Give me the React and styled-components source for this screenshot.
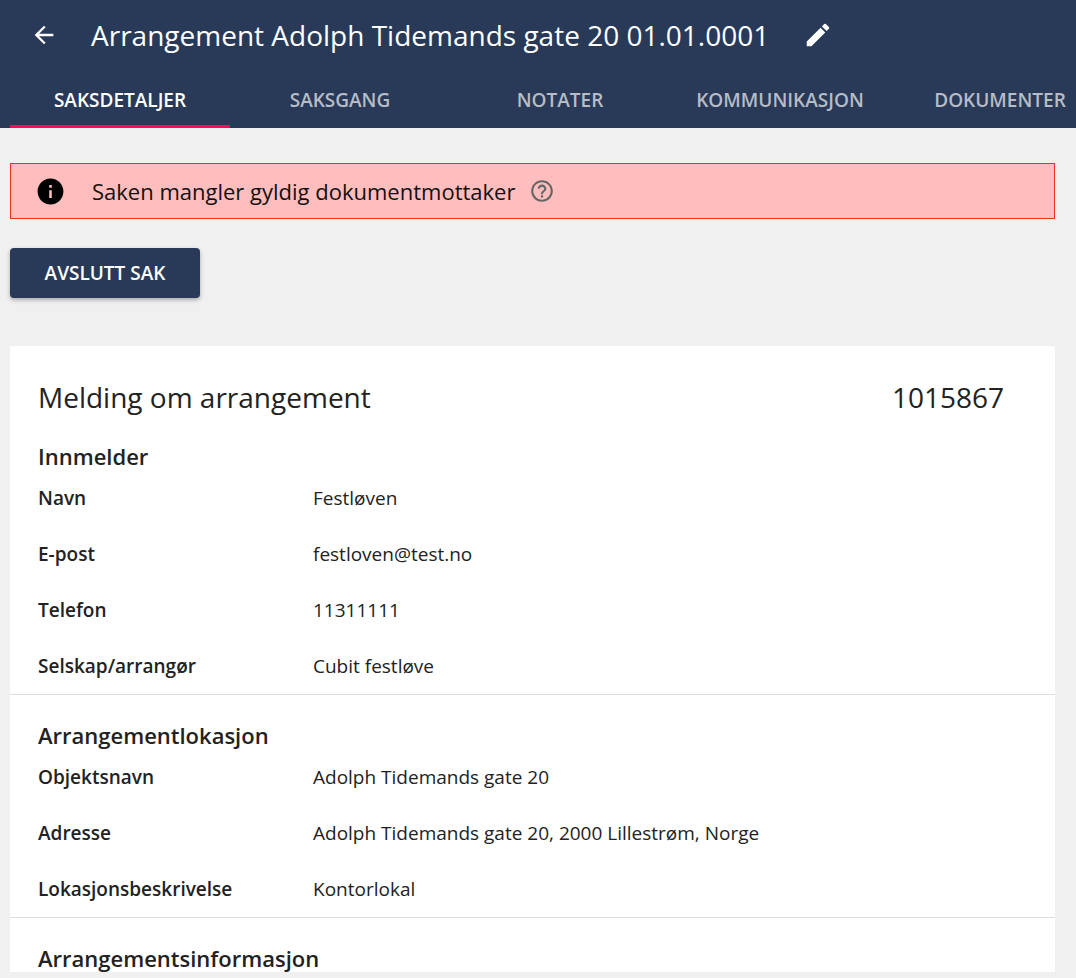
import React from 'react';
import styled, { createGlobalStyle } from 'styled-components';

const Global = createGlobalStyle`
  body { margin: 0; background: #f0f0f0; font-family: "Open Sans", sans-serif; color: #222; overflow: hidden; }
`;

const Header = styled.header`
  background: #283a58;
  color: #fff;
  height: 128px;
`;

const TitleRow = styled.div`
  display: flex;
  align-items: center;
  height: 70px;
  padding-left: 30px;
`;

const Title = styled.h1`
  font-size: 28px;
  font-weight: 400;
  margin: 0 34px 0 33px;
`;

const Tabs = styled.nav`
  display: flex;
  padding-left: 10px;
  height: 58px;
  white-space: nowrap;
`;

const Tab = styled.div`
  flex: 0 0 220px;
  display: flex;
  align-items: center;
  justify-content: center;
  font-size: 19px;
  font-weight: 600;
  color: ${p => (p.$active ? '#fff' : '#b7bcc6')};
  border-bottom: 3px solid ${p => (p.$active ? '#ff0a5a' : 'transparent')};
  box-sizing: border-box;
  padding-top: 4px;
`;

const Main = styled.main`
  padding: 35px 21px 0 10px;
`;

const Alert = styled.div`
  display: flex;
  align-items: center;
  height: 56px;
  box-sizing: border-box;
  background: #ffbdbd;
  border: 1px solid #e8361d;
  padding-left: 24px;
  font-size: 22px;
  color: #111;
`;

const AlertText = styled.span`
  margin: 0 14px 0 26px;
`;

const Button = styled.button`
  margin-top: 29px;
  width: 190px;
  height: 50px;
  border: none;
  border-radius: 4px;
  background: #283a58;
  color: #fff;
  font-family: "Open Sans", sans-serif;
  font-size: 19px;
  font-weight: 600;
  box-shadow: 0 2px 4px rgba(0,0,0,0.3);
`;

const Card = styled.section`
  margin-top: 48px;
  background: #fff;
`;

const CardHead = styled.div`
  display: flex;
  justify-content: space-between;
  align-items: center;
  padding: 32px 51px 0 28px;
  font-size: 28px;
  line-height: 38px;
`;

const Group = styled.div`
  padding: 0 28px;
  border-bottom: ${p => (p.$last ? 'none' : '1px solid #ddd')};
`;

const GroupTitle = styled.h2`
  font-size: 22px;
  font-weight: 600;
  margin: 0;
  padding-top: 26px;
  height: 28px;
  line-height: 28px;
`;

const Row = styled.div`
  display: grid;
  grid-template-columns: 275px 1fr;
  height: 56px;
  align-items: center;
  font-size: 19px;
`;

const Label = styled.span`
  font-weight: 600;
`;

const Back = () => (
  <svg width="28" height="28" viewBox="0 0 24 24" fill="#fff">
    <path d="M20 11H7.83l5.59-5.59L12 4l-8 8 8 8 1.41-1.41L7.83 13H20v-2z" />
  </svg>
);

const Pencil = () => (
  <svg width="30" height="30" viewBox="0 0 24 24" fill="#fff">
    <path d="M3 17.25V21h3.75L17.81 9.94l-3.75-3.75L3 17.25zM20.71 7.04a1 1 0 0 0 0-1.41l-2.34-2.34a1 1 0 0 0-1.41 0l-1.83 1.83 3.75 3.75 1.83-1.83z" />
  </svg>
);

const Info = () => (
  <svg width="31" height="31" viewBox="0 0 24 24" fill="#000">
    <path d="M12 2C6.48 2 2 6.48 2 12s4.48 10 10 10 10-4.48 10-10S17.52 2 12 2zm1 15h-2v-6h2v6zm0-8h-2V7h2v2z" />
  </svg>
);

const Help = () => (
  <svg width="26" height="26" viewBox="0 0 24 24" fill="#666">
    <path d="M11 18h2v-2h-2v2zm1-16C6.48 2 2 6.48 2 12s4.48 10 10 10 10-4.48 10-10S17.52 2 12 2zm0 18c-4.41 0-8-3.59-8-8s3.59-8 8-8 8 3.59 8 8-3.59 8-8 8zm0-14c-2.21 0-4 1.79-4 4h2c0-1.1.9-2 2-2s2 .9 2 2c0 2-3 1.75-3 5h2c0-2.250 3-2.5 3-5 0-2.21-1.79-4-4-4z" />
  </svg>
);

const groups = [
  {
    title: 'Innmelder',
    rows: [
      ['Navn', 'Festløven'],
      ['E-post', 'festloven@test.no'],
      ['Telefon', '11311111'],
      ['Selskap/arrangør', 'Cubit festløve'],
    ],
  },
  {
    title: 'Arrangementlokasjon',
    rows: [
      ['Objektsnavn', 'Adolph Tidemands gate 20'],
      ['Adresse', 'Adolph Tidemands gate 20, 2000 Lillestrøm, Norge'],
      ['Lokasjonsbeskrivelse', 'Kontorlokal'],
    ],
  },
  { title: 'Arrangementsinformasjon', rows: [] },
];

export default function App() {
  const tabs = ['SAKSDETALJER', 'SAKSGANG', 'NOTATER', 'KOMMUNIKASJON', 'DOKUMENTER'];
  return (
    <>
      <Global />
      <Header>
        <TitleRow>
          <Back />
          <Title>Arrangement Adolph Tidemands gate 20 01.01.0001</Title>
          <Pencil />
        </TitleRow>
        <Tabs>
          {tabs.map((t, i) => (
            <Tab key={t} $active={i === 0}>{t}</Tab>
          ))}
        </Tabs>
      </Header>
      <Main>
        <Alert>
          <Info />
          <AlertText>Saken mangler gyldig dokumentmottaker</AlertText>
          <Help />
        </Alert>
        <Button>AVSLUTT SAK</Button>
        <Card>
          <CardHead>
            <span>Melding om arrangement</span>
            <span>1015867</span>
          </CardHead>
          {groups.map((g, i) => (
            <Group key={g.title} $last={i === groups.length - 1}>
              <GroupTitle>{g.title}</GroupTitle>
              {g.rows.map(([l, v]) => (
                <Row key={l}>
                  <Label>{l}</Label>
                  <span>{v}</span>
                </Row>
              ))}
            </Group>
          ))}
        </Card>
      </Main>
    </>
  );
}
